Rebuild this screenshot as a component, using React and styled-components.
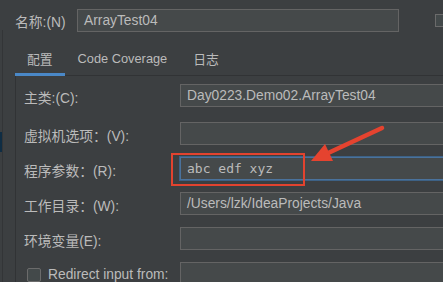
import React from "react";
import styled, { createGlobalStyle } from "styled-components";

const GlobalStyle = createGlobalStyle`
  html, body {
    margin: 0;
    padding: 0;
    background: #3c3f41;
    overflow: hidden;
  }
`;

const Window = styled.div`
  position: relative;
  width: 443px;
  height: 282px;
  display: flex;
  overflow: hidden;
  background: #3c3f41;
  color: #bbbbbb;
  font-family: "Liberation Sans", "Noto Sans CJK SC", sans-serif;
  font-size: 13.8px;
`;

const TreeStrip = styled.div`
  width: 3px;
  flex-shrink: 0;
  padding-top: 30px;
  display: flex;
  flex-direction: column;
`;

const TreeEdge = styled.div`
  flex: 1;
  border-right: 1px solid #333537;
  padding-top: 102px;
`;

const TreeSelected = styled.div`
  height: 20px;
  background: #0f2d44;
`;

const Main = styled.div`
  flex: 1;
  padding: 9px 0 0 12px;
  display: flex;
  flex-direction: column;
  min-width: 0;
`;

const NameRow = styled.div`
  display: flex;
  align-items: center;
  height: 23px;
`;

const NameLabel = styled.span`
  width: 62px;
  flex-shrink: 0;
`;

const Field = styled.div`
  box-sizing: border-box;
  height: 23px;
  width: ${(p) => (p.$width ? `${p.$width}px` : "300px")};
  flex-shrink: 0;
  display: flex;
  align-items: center;
  padding-left: 6px;
  background: #45494a;
  border: 1px solid ${(p) => (p.$focused ? "#4a729c" : "#646464")};
  box-shadow: ${(p) => (p.$focused ? "0 0 0 1px #3d6185" : "none")};
  color: #bbbbbb;
  white-space: nowrap;
  font-family: ${(p) =>
    p.$mono
      ? '"DejaVu Sans Mono", "Liberation Mono", monospace'
      : '"Liberation Sans", "Noto Sans CJK SC", sans-serif'};
  font-size: ${(p) => (p.$mono ? 13 : 13.8)}px;
`;

const ShareBox = styled.div`
  width: 14px;
  height: 13px;
  margin-left: 36px;
  flex-shrink: 0;
  box-sizing: border-box;
  border: 1px solid #6b6b6b;
  background: #43494a;
`;

const TabBar = styled.div`
  display: flex;
  height: 32px;
  margin-top: 12px;
  border-bottom: 1px solid #313335;
  box-sizing: border-box;
`;

const Tab = styled.div`
  box-sizing: border-box;
  height: 32px;
  margin-bottom: -1px;
  padding: 0 ${(p) => p.$pad || 12}px;
  display: flex;
  align-items: center;
  border-bottom: 3px solid ${(p) => (p.$active ? "#4a88c7" : "transparent")};
  color: #bbbbbb;
  font-size: 12.8px;
`;

const Panel = styled.div`
  flex: 1;
  border-left: 1px solid #313335;
  padding: 8px 0 0 8px;
  display: flex;
  flex-direction: column;
  gap: 12px;
`;

const Row = styled.div`
  display: flex;
  align-items: center;
  height: 23px;
  margin-bottom: ${(p) => p.$extra || 0}px;
`;

const Label = styled.span`
  width: 156px;
  flex-shrink: 0;
  padding-top: 2px;
  display: flex;
  align-items: center;
  white-space: pre;
`;

const CheckBox = styled.span`
  width: 14px;
  height: 14px;
  box-sizing: border-box;
  margin: 0 7px 0 3px;
  border: 1px solid #6b6b6b;
  border-radius: 2px;
  background: #43494a;
`;

const Highlight = styled.div`
  position: absolute;
  left: 171px;
  top: 153px;
  width: 134px;
  height: 33px;
  box-sizing: border-box;
  border: 2px solid #e2432f;
  pointer-events: none;
`;

const Arrow = styled.svg`
  position: absolute;
  left: 0;
  top: 0;
  pointer-events: none;
`;

const rows = [
  { label: "主类:(C):", value: "Day0223.Demo02.ArrayTest04", extra: 3 },
  { label: "虚拟机选项：(V):", value: "" },
  { label: "程序参数：(R):", value: "abc edf xyz", mono: true, focused: true },
  { label: "工作目录：(W):", value: "/Users/lzk/IdeaProjects/Java" },
  { label: "环境变量(E):", value: "" },
];

export default function App() {
  return (
    <>
      <GlobalStyle />
      <Window>
        <TreeStrip>
          <TreeEdge>
            <TreeSelected />
          </TreeEdge>
        </TreeStrip>
        <Main>
          <NameRow>
            <NameLabel>名称:(N)</NameLabel>
            <Field $width={322}>ArrayTest04</Field>
            <ShareBox />
          </NameRow>
          <TabBar>
            <Tab $active>配置</Tab>
            <Tab $pad={13}>Code Coverage</Tab>
            <Tab $pad={13}>日志</Tab>
          </TabBar>
          <Panel>
            {rows.map((r) => (
              <Row key={r.label} $extra={r.extra}>
                <Label>{r.label}</Label>
                <Field $mono={r.mono} $focused={r.focused}>
                  {r.value}
                </Field>
              </Row>
            ))}
            <Row>
              <Label>
                <CheckBox />
                Redirect input from:
              </Label>
              <Field />
            </Row>
          </Panel>
        </Main>
        <Highlight />
        <Arrow width="443" height="282" viewBox="0 0 443 282">
          <line
            x1="382"
            y1="128"
            x2="326"
            y2="154"
            stroke="#e5432f"
            strokeWidth="4.5"
            strokeLinecap="round"
          />
          <polygon points="311,161 325,144 333,161" fill="#e5432f" />
        </Arrow>
      </Window>
    </>
  );
}
